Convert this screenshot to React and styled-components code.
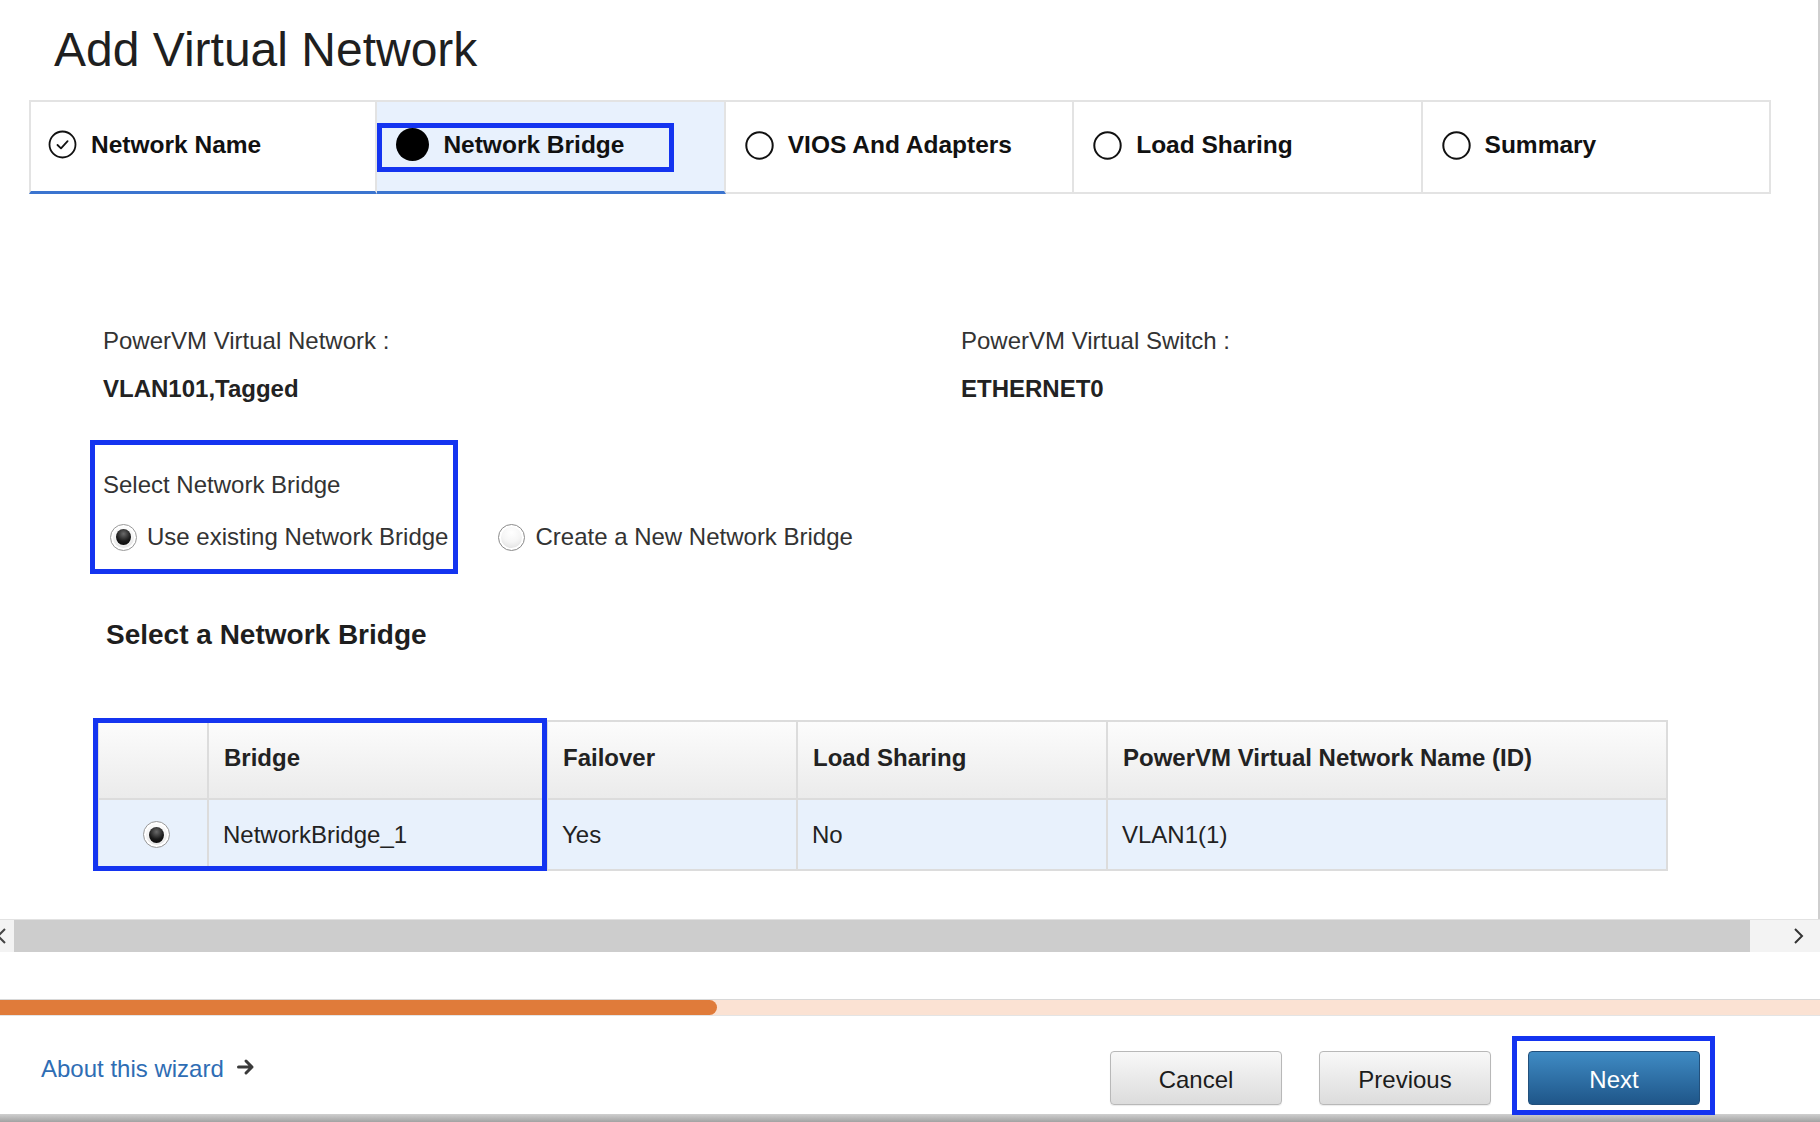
import React from 'react';
import styled, { createGlobalStyle, css } from 'styled-components';

const BLUE = '#1434f0';

const GlobalStyle = createGlobalStyle`
  html, body { margin: 0; padding: 0; background: #fff; }
  body { font-family: "Liberation Sans", Arial, Helvetica, sans-serif; color: #222; }
  * { box-sizing: border-box; }
`;

const Page = styled.div`
  width: 1820px;
  height: 1122px;
  overflow: hidden;
  display: flex;
  flex-direction: column;
  background: #fff;
`;

const Main = styled.div`
  border-right: 2px solid #cfcfcf;
  padding-bottom: 48px;
`;

const Title = styled.h1`
  margin: 0;
  padding: 22px 0 0 54px;
  font-size: 48px;
  line-height: 56px;
  font-weight: 400;
  color: #1f1f1f;
`;

const Tabs = styled.div`
  margin: 22px 0 0 29px;
  display: grid;
  grid-template-columns: repeat(5, 348.4px);
`;

const Tab = styled.div`
  position: relative;
  height: 94px;
  display: flex;
  align-items: center;
  gap: 14px;
  padding: 0 0 4px 19px;
  border: 2px solid #e3e3e3;
  border-left: none;
  &:first-child { border-left: 2px solid #e3e3e3; padding-left: 17px; }
  background: ${p => (p.$current ? '#e8f1fd' : '#fff')};
  ${p => p.$reached && css`border-bottom: 3px solid #3b74cf;`}
  font-size: 24.5px;
  font-weight: 700;
  line-height: 28px;
  color: #111;
  white-space: nowrap;
`;

const Highlight = styled.div`
  position: absolute;
  left: ${p => p.$left}px;
  top: ${p => p.$top}px;
  width: ${p => p.$w}px;
  height: ${p => p.$h}px;
  border: 5px solid ${BLUE};
  pointer-events: none;
  z-index: 2;
`;

const Content = styled.div`
  padding: 133px 0 0 103px;
`;

const InfoGrid = styled.div`
  display: grid;
  grid-template-columns: 858px auto;
`;

const Info = styled.div`
  display: flex;
  flex-direction: column;
  gap: 20px;
`;

const InfoLabel = styled.div`
  font-size: 24px;
  line-height: 28px;
  color: #333;
`;

const InfoValue = styled.div`
  font-size: 24px;
  line-height: 28px;
  font-weight: 700;
  color: #222;
`;

const Fieldset = styled.div`
  position: relative;
  margin-top: 68px;
`;

const Legend = styled.div`
  font-size: 24px;
  line-height: 28px;
  color: #333;
`;

const RadioRow = styled.div`
  margin-top: 23px;
  height: 30px;
  display: flex;
  align-items: center;
  padding-left: 7px;
`;

const Option = styled.label`
  display: flex;
  align-items: center;
  gap: 10px;
  font-size: 24px;
  line-height: 30px;
  color: #333;
  & + & { margin-left: 50px; }
`;

const Radio = styled.span`
  flex: none;
  width: 27px;
  height: 27px;
  border-radius: 50%;
  border: 1.5px solid #8c8c8c;
  background: radial-gradient(circle at 50% 30%, #ffffff 0%, #f5f5f5 45%, #d3d3d3 100%);
  box-shadow: inset 0 0 0 2px #fff;
  display: inline-flex;
  align-items: center;
  justify-content: center;
  ${p => p.$checked && css`
    border-color: #9a9a9a;
    &::after {
      content: '';
      width: 15px;
      height: 16px;
      border-radius: 50%;
      background: radial-gradient(circle at 50% 30%, #6a6a6a 0%, #1a1a1a 55%, #000 100%);
    }
  `}
`;

const Heading = styled.h2`
  margin: 67px 0 0 3px;
  font-size: 28px;
  line-height: 32px;
  font-weight: 700;
  color: #1e1e1e;
`;

const Table = styled.div`
  position: relative;
  margin: 69px 0 0 -6px;
  width: 1571px;
  border: 2px solid #dcdcdc;
  display: grid;
  grid-template-columns: 108px 339px 250px 310px 560px;
`;

const HeadCell = styled.div`
  height: 78px;
  border-bottom: 2px solid #dcdcdc;
  background: linear-gradient(#fcfcfc, #ebebeb);
  display: flex;
  align-items: center;
  padding: 0 0 4px 15px;
  font-size: 24px;
  line-height: 28px;
  font-weight: 700;
  color: #222;
  & + & { border-left: 2px solid #dcdcdc; }
`;

const BodyCell = styled.div`
  height: 69px;
  background: #e8f1fc;
  display: flex;
  align-items: center;
  justify-content: ${p => (p.$center ? 'center' : 'flex-start')};
  padding: ${p => (p.$center ? '0 0 0 6px' : '0 0 0 14px')};
  font-size: 24px;
  line-height: 28px;
  color: #222;
  & + & { border-left: 2px solid #dcdcdc; }
`;

const Scrollbar = styled.div`
  height: 33px;
  display: flex;
  border-top: 1px solid #e2e2e2;
  background: #f3f3f3;
`;

const ScrollBtn = styled.div`
  width: ${p => p.$w}px;
  display: flex;
  align-items: center;
  justify-content: ${p => p.$align};
  padding-right: ${p => p.$pr || 0}px;
  overflow: hidden;
`;

const Thumb = styled.div`
  flex: 1;
  background: #cdcdcd;
`;

const Progress = styled.div`
  margin-top: 47px;
  height: 17px;
  background: #fbe2d3;
  border-top: 1px solid #d8d8d8;
  border-bottom: 1px solid #e4e4e4;
`;

const ProgressFill = styled.div`
  height: 100%;
  background: #e07b3a;
  border-radius: 0 8px 8px 0;
`;

const Footer = styled.div`
  height: 98px;
  display: flex;
  justify-content: space-between;
  align-items: flex-start;
  padding: 35px 120px 0 41px;
`;

const AboutLink = styled.a`
  margin-top: 4px;
  display: flex;
  align-items: center;
  gap: 13px;
  font-size: 24px;
  line-height: 28px;
  color: #2e6db4;
  text-decoration: none;
  cursor: pointer;
  svg { margin-top: -4px; }
`;

const Buttons = styled.div`
  display: flex;
  gap: 37px;
`;

const ButtonWrap = styled.span`
  position: relative;
  display: inline-flex;
`;

const Button = styled.button`
  width: 172px;
  height: 54px;
  padding-top: 4px;
  border-radius: 4px;
  font-family: inherit;
  font-size: 24px;
  line-height: 28px;
  cursor: pointer;
  ${p => p.$primary ? css`
    border: 1px solid #22507c;
    background: linear-gradient(#3f8bc4, #1f5689);
    color: #fff;
  ` : css`
    border: 1px solid #b8b8b8;
    background: linear-gradient(#f8f8f8, #dcdcdc);
    color: #1c1c1c;
    box-shadow: 0 1px 1px rgba(0,0,0,0.08);
  `}
`;

const BottomBar = styled.div`
  height: 8px;
  background: linear-gradient(#cfcfcf, #a2a2a2);
`;

const StepIcon = ({ state }) => {
  if (state === 'done') {
    return (
      <svg width="29" height="29" viewBox="0 0 29 29">
        <circle cx="14.5" cy="14.5" r="13" fill="none" stroke="#111" strokeWidth="1.8" />
        <path d="M9.5 15 L13 18.4 L19.6 11.2" fill="none" stroke="#111" strokeWidth="1.8" strokeLinecap="round" strokeLinejoin="round" />
      </svg>
    );
  }
  if (state === 'current') {
    return (
      <svg width="33" height="33" viewBox="0 0 33 33">
        <circle cx="16.5" cy="16.5" r="16.5" fill="#000" />
      </svg>
    );
  }
  return (
    <svg width="29" height="29" viewBox="0 0 29 29">
      <circle cx="14.5" cy="14.5" r="13.2" fill="none" stroke="#111" strokeWidth="2" />
    </svg>
  );
};

const steps = [
  { label: 'Network Name', state: 'done' },
  { label: 'Network Bridge', state: 'current' },
  { label: 'VIOS And Adapters', state: 'todo' },
  { label: 'Load Sharing', state: 'todo' },
  { label: 'Summary', state: 'todo' },
];

const columns = ['', 'Bridge', 'Failover', 'Load Sharing', 'PowerVM Virtual Network Name (ID)'];

export default function App() {
  const progress = 39.4;
  return (
    <>
      <GlobalStyle />
      <Page>
        <Main>
          <Title>Add Virtual Network</Title>
          <Tabs>
            {steps.map(s => (
              <Tab key={s.label} $current={s.state === 'current'} $reached={s.state !== 'todo'}>
                <StepIcon state={s.state} />
                <span>{s.label}</span>
                {s.state === 'current' && <Highlight $left={0} $top={21} $w={297} $h={49} />}
              </Tab>
            ))}
          </Tabs>
          <Content>
            <InfoGrid>
              <Info>
                <InfoLabel>PowerVM Virtual Network :</InfoLabel>
                <InfoValue>VLAN101,Tagged</InfoValue>
              </Info>
              <Info>
                <InfoLabel>PowerVM Virtual Switch :</InfoLabel>
                <InfoValue>ETHERNET0</InfoValue>
              </Info>
            </InfoGrid>
            <Fieldset>
              <Legend>Select Network Bridge</Legend>
              <RadioRow>
                <Option><Radio $checked />Use existing Network Bridge</Option>
                <Option><Radio />Create a New Network Bridge</Option>
              </RadioRow>
              <Highlight $left={-13} $top={-31} $w={368} $h={134} />
            </Fieldset>
            <Heading>Select a Network Bridge</Heading>
            <Table>
              {columns.map((c, i) => <HeadCell key={i}>{c}</HeadCell>)}
              <BodyCell $center><Radio $checked /></BodyCell>
              <BodyCell>NetworkBridge_1</BodyCell>
              <BodyCell>Yes</BodyCell>
              <BodyCell>No</BodyCell>
              <BodyCell>VLAN1(1)</BodyCell>
              <Highlight $left={-6} $top={-4} $w={454} $h={153} />
            </Table>
          </Content>
        </Main>
        <Scrollbar>
          <ScrollBtn $w={14} $align="flex-start">
            <svg width="14" height="22" viewBox="0 0 14 22">
              <polyline points="5,4 -2,11 5,18" fill="none" stroke="#444" strokeWidth="2" />
            </svg>
          </ScrollBtn>
          <Thumb />
          <ScrollBtn $w={70} $align="flex-end" $pr={16}>
            <svg width="12" height="20" viewBox="0 0 12 20">
              <polyline points="3,3 10,10 3,17" fill="none" stroke="#333" strokeWidth="2" />
            </svg>
          </ScrollBtn>
        </Scrollbar>
        <Progress>
          <ProgressFill style={{ width: `${progress}%` }} />
        </Progress>
        <Footer>
          <AboutLink>
            About this wizard
            <svg width="18" height="18" viewBox="0 0 18 18">
              <path d="M1.5 9 H15 M9 3 L15 9 L9 15" fill="none" stroke="#3a3a3a" strokeWidth="3" strokeLinecap="round" strokeLinejoin="round" />
            </svg>
          </AboutLink>
          <Buttons>
            <Button>Cancel</Button>
            <Button>Previous</Button>
            <ButtonWrap>
              <Button $primary>Next</Button>
              <Highlight $left={-16} $top={-15} $w={203} $h={79} />
            </ButtonWrap>
          </Buttons>
        </Footer>
        <BottomBar />
      </Page>
    </>
  );
}
